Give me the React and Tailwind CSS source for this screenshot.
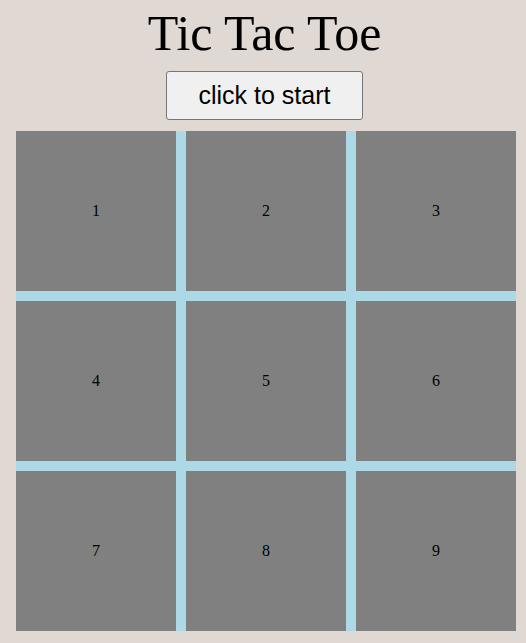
export default function App() {
  const cells = [1, 2, 3, 4, 5, 6, 7, 8, 9];

  return (
    <div className="min-h-[643px] w-full bg-[#e0d8d3] flex flex-col items-center pt-[6px] pl-[3px] font-['Liberation_Serif',serif]">
      {/* Title */}
      <h1 className="text-[50px] leading-[55px] text-black">Tic Tac Toe</h1>

      {/* Start button */}
      <button className="mt-[10px] w-[197px] h-[49px] bg-[#f0f0f0] border border-[#767676] rounded-[3px] text-[25px] text-black font-['Liberation_Sans',Arial,sans-serif]">
        click to start
      </button>

      {/* Board */}
      <div className="mt-[11px] self-start ml-[13px] grid grid-cols-3 gap-[10px] bg-[#add8e6] w-[500px]">
        {cells.map((n) => (
          <div
            key={n}
            className="h-[160px] bg-[#808080] flex items-center justify-center text-[16px] text-black"
          >
            {n}
          </div>
        ))}
      </div>
    </div>
  );
}
